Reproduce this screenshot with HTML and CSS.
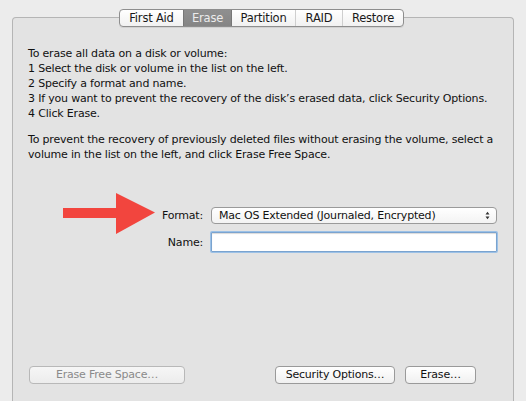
FILE: index.html
```html
<!DOCTYPE html>
<html>
<head>
<meta charset="utf-8">
<link rel="stylesheet" href="styles.css">
</head>
<body>
<div class="window">
  <div class="tabs">
    <div class="tab t1">First Aid</div>
    <div class="tab selected t2">Erase</div>
    <div class="tab t3">Partition</div>
    <div class="tab t4">RAID</div>
    <div class="tab t5">Restore</div>
  </div>
  <div class="panel">
    <p class="para">To erase all data on a disk or volume:<br>1 Select the disk or volume in the list on the left.<br>2 Specify a format and name.<br>3 If you want to prevent the recovery of the disk’s erased data, click Security Options.<br>4 Click Erase.</p>
    <p class="para second">To prevent the recovery of previously deleted files without erasing the volume, select a volume in the list on the left, and click Erase Free Space.</p>
    <div class="form">
      <label class="label">Format:</label>
      <div class="popup"><span>Mac OS Extended (Journaled, Encrypted)</span><span class="updown"><svg width="5" height="9" viewBox="0 0 5 9"><path d="M0.5 3.5 L2.5 0.8 L4.5 3.5 Z M0.5 5.5 L2.5 8.2 L4.5 5.5 Z" fill="#333"/></svg></span></div>
      <label class="label">Name:</label>
      <div class="input"></div>
    </div>
    <div class="buttons">
      <div class="btn disabled free">Erase Free Space…</div>
      <div class="spacer"></div>
      <div class="btn security">Security Options…</div>
      <div class="btn erase">Erase…</div>
    </div>
    <svg class="arrow" width="96" height="46" viewBox="0 0 96 46">
      <path d="M0 15 L53 15 L53 0 L92 19.5 L53 41 L53 25 L0 25 Z" fill="#f2453e"/>
    </svg>
  </div>
</div>
</body>
</html>
```

FILE: styles.css
```css
html, body {
  margin: 0;
  padding: 0;
}
body {
  width: 526px;
  height: 401px;
  overflow: hidden;
  background: #ececec;
  font-family: "DejaVu Sans", "Liberation Sans", sans-serif;
  font-size: 11px;
  color: #111;
}
.window {
  padding: 9px 12px 0 12px;
}
.tabs {
  position: relative;
  z-index: 2;
  display: flex;
  width: max-content;
  margin-left: 107px;
  height: 18px;
  border: 1px solid #8e8e8e;
  border-radius: 4px;
  box-sizing: border-box;
  background: linear-gradient(#ffffff, #f1f1f1);
  overflow: hidden;
  box-shadow: 0 1px 0 rgba(0,0,0,0.08);
}
.tab {
  font-size: 11.5px;
  line-height: 16px;
  text-align: center;
  border-left: 1px solid #cfcfcf;
  color: #1a1a1a;
  box-sizing: border-box;
  letter-spacing: -0.2px;
}
.tab:first-child {
  border-left: none;
}
.t1 { width: 63px; }
.t2 { width: 49px; }
.t3 { width: 64px; }
.t4 { width: 47px; }
.t5 { width: 61px; }
.tab.selected {
  background: linear-gradient(#8f8f8f, #858585);
  color: #ececec;
  border-left: 1px solid #777;
  border-right: 1px solid #777;
  margin-right: -1px;
  position: relative;
}
.panel {
  position: relative;
  margin-top: -10px;
  height: 400px;
  border: 1px solid #b5b5b5;
  border-bottom: none;
  border-radius: 4px 4px 0 0;
  background: #e3e3e3;
  padding: 28px 0 0 15px;
  box-sizing: border-box;
}
.para {
  margin: 0;
  line-height: 15px;
  letter-spacing: -0.18px;
  padding-right: 10px;
}
.second {
  margin-top: 11px;
}
.form {
  display: grid;
  grid-template-columns: 80px 286px;
  column-gap: 8px;
  row-gap: 8px;
  margin: 45px 0 0 95px;
  align-items: center;
}
.label {
  text-align: right;
  letter-spacing: -0.2px;
}
.popup {
  border: 1px solid #9a9a9a;
  border-radius: 4px;
  background: linear-gradient(#ffffff, #f3f3f3);
  display: flex;
  align-items: center;
  justify-content: space-between;
  padding: 0 6px 0 7px;
  box-sizing: border-box;
  height: 17px;
  letter-spacing: -0.2px;
}
.updown {
  display: flex;
}
.input {
  height: 20px;
  box-sizing: border-box;
  border: 1px solid #7aa3cf;
  background: #fff;
  box-shadow: 0 0 0 1px #9cc1e6, inset 0 1px 1px rgba(0,0,0,0.15);
  border-radius: 1px;
}
.buttons {
  display: flex;
  position: absolute;
  left: 16px;
  right: 37px;
  top: 348px;
}
.spacer {
  flex: 1;
}
.btn {
  height: 18px;
  box-sizing: border-box;
  border: 1px solid #9a9a9a;
  border-radius: 4px;
  background: linear-gradient(#ffffff, #f0f0f0);
  text-align: center;
  line-height: 16px;
  letter-spacing: -0.2px;
  color: #111;
}
.btn.disabled {
  color: #8a8a8a;
  border-color: #b8b8b8;
  background: linear-gradient(#f6f6f6, #ececec);
}
.free { width: 156px; }
.security { width: 120px; }
.erase { width: 71px; margin-left: 10px; }
.arrow {
  position: absolute;
  left: 50px;
  top: 175px;
}
```
